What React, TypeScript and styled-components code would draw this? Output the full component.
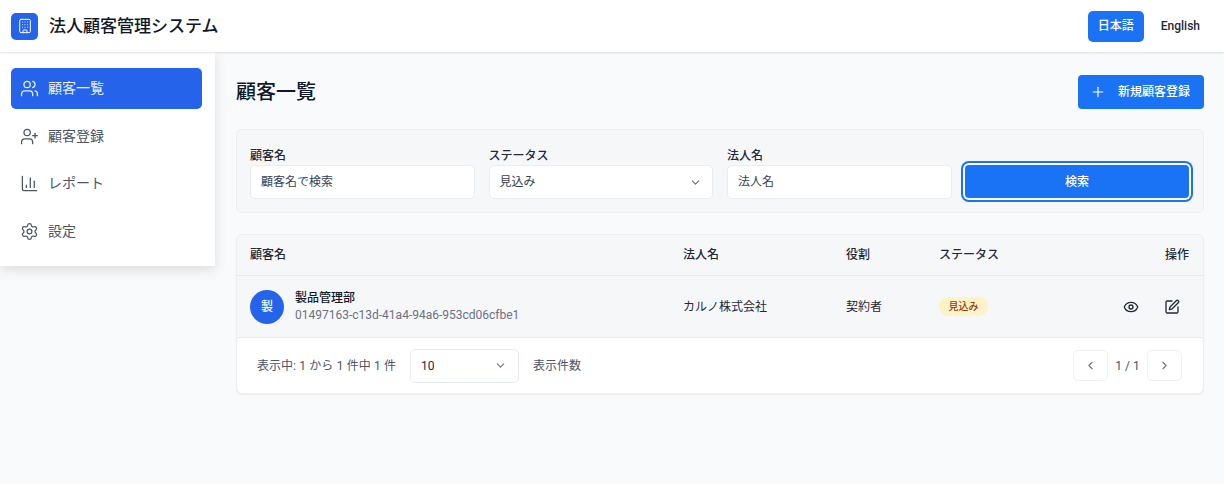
import * as React from 'react'
import styled, { createGlobalStyle } from 'styled-components'
import {
  Building,
  ChartColumn,
  ChevronDown,
  ChevronLeft,
  ChevronRight,
  Eye,
  Plus,
  Settings,
  SquarePen,
  UserPlus,
  Users,
} from 'lucide-react'

const GlobalStyle = createGlobalStyle`
  html, body {
    margin: 0;
    padding: 0;
    height: 100%;
    background: #f9fafb;
    color: #111827;
    font-family: Roboto, 'Noto Sans CJK JP', sans-serif;
    line-height: 1.5;
    overflow: hidden;
  }
  * {
    box-sizing: border-box;
  }
  button {
    line-height: 1.5;
  }
`

const Page = styled.div`
  width: 1224px;
  height: 484px;
  display: flex;
  flex-direction: column;
`

const Header = styled.header`
  height: 52px;
  flex: none;
  display: flex;
  align-items: center;
  justify-content: space-between;
  padding: 0 12px 0 11px;
  background: #fff;
  box-shadow: 0 1px 2px rgba(0, 0, 0, 0.12);
  position: relative;
  z-index: 2;
`

const Brand = styled.div`
  display: flex;
  align-items: center;
  gap: 11px;
`

const LogoMark = styled.div`
  width: 27px;
  height: 27px;
  border-radius: 5px;
  background: #2563eb;
  color: #fff;
  display: flex;
  align-items: center;
  justify-content: center;
`

const AppName = styled.h1`
  margin: 0;
  font-size: 17px;
  font-weight: 500;
  line-height: 24px;
  color: #111827;
`

const LangSwitch = styled.div`
  display: flex;
  gap: 5px;
`

const LangButton = styled.button<{ $active?: boolean }>`
  height: 31px;
  padding: 0 ${(props) => (props.$active ? '10px' : '12px')};
  border: 0;
  border-radius: 5px;
  font-family: inherit;
  font-size: 12px;
  font-weight: 500;
  background: ${(props) => (props.$active ? '#1a73f5' : 'transparent')};
  color: ${(props) => (props.$active ? '#fff' : '#1f2937')};
`

const Body = styled.div`
  flex: 1;
  display: flex;
  align-items: flex-start;
`

const Sidebar = styled.nav`
  width: 215px;
  flex: none;
  height: 214px;
  padding: 16px 13px 0 11px;
  background: #fff;
  display: flex;
  flex-direction: column;
  gap: 6.7px;
  box-shadow: 0 4px 12px rgba(0, 0, 0, 0.12);
  position: relative;
  z-index: 1;
`

const NavItem = styled.a<{ $active?: boolean }>`
  height: 41px;
  display: flex;
  align-items: center;
  gap: 9px;
  padding-left: 9px;
  border-radius: 5px;
  font-size: 14px;
  background: ${(props) => (props.$active ? '#2563eb' : 'transparent')};
  color: ${(props) => (props.$active ? '#e8efff' : '#4b5563')};
`

const Main = styled.main`
  flex: 1;
  padding: 23px 20px 0 21px;
  display: flex;
  flex-direction: column;
`

const TitleRow = styled.div`
  height: 34px;
  display: flex;
  align-items: center;
  justify-content: space-between;
  margin-bottom: 20px;
`

const PageTitle = styled.h2`
  margin: 0;
  font-size: 20px;
  font-weight: 500;
  color: #111827;
`

const AddButton = styled.button`
  width: 126px;
  height: 34px;
  border: 0;
  border-radius: 4px;
  background: #1a73f5;
  color: #fff;
  font-family: inherit;
  font-size: 12px;
  font-weight: 500;
  display: flex;
  align-items: center;
  gap: 12px;
  padding: 0 0 0 12px;
`

const FilterCard = styled.section`
  height: 84px;
  border: 1px solid #eceef1;
  border-radius: 6px;
  background: #f6f7f9;
  padding: 17px 13px 0;
  display: grid;
  grid-template-columns: repeat(4, 224.5px);
  column-gap: 14px;
  margin-bottom: 21px;
`

const Field = styled.div`
  display: flex;
  flex-direction: column;
`

const FieldLabel = styled.label`
  font-size: 12px;
  line-height: 18px;
  height: 18px;
  font-weight: 500;
  color: #1f2937;
`

const TextBox = styled.div`
  height: 34px;
  background: #fff;
  border: 1px solid #e9ecf0;
  border-radius: 5px;
  padding: 0 10px;
  display: flex;
  align-items: center;
  justify-content: space-between;
  font-size: 12px;
  color: #374151;
`

const SearchButton = styled.button`
  height: 33px;
  margin: 18px 0 0 -0.5px;
  width: 224px;
  border: 0;
  border-radius: 4px;
  background: #1a73f5;
  color: #fff;
  font-family: inherit;
  font-size: 12px;
  font-weight: 500;
  box-shadow: 0 0 0 2px #fff, 0 0 0 4px #1a73f5;
`

const TableCard = styled.section`
  border: 1px solid #eceef1;
  border-radius: 6px;
  background: #fff;
  overflow: hidden;
  box-shadow: 0 1px 2px rgba(0, 0, 0, 0.06);
`

const Row = styled.div<{ $height: number }>`
  height: ${(props) => props.$height}px;
  display: grid;
  grid-template-columns: 433px 163px 93px 1fr auto;
  align-items: center;
  padding: 0 14px 0 13px;
  background: #f6f7f9;
  border-bottom: 1px solid #e7eaee;
  font-size: 12px;
`

const HeadCell = styled.div<{ $right?: boolean }>`
  font-weight: 500;
  color: #1f2937;
  text-align: ${(props) => (props.$right ? 'right' : 'left')};
`

const Cell = styled.div`
  color: #1f2937;
`

const CustomerCell = styled.div`
  display: flex;
  align-items: center;
  gap: 11px;
`

const Avatar = styled.div`
  width: 34px;
  height: 34px;
  border-radius: 50%;
  background: #2563eb;
  color: #fff;
  font-size: 12px;
  font-weight: 500;
  display: flex;
  align-items: center;
  justify-content: center;
`

const CustomerName = styled.div`
  font-size: 12px;
  line-height: 17px;
  font-weight: 500;
  color: #111827;
`

const CustomerId = styled.div`
  font-size: 12px;
  line-height: 17px;
  color: #6b7280;
`

const Badge = styled.span`
  display: inline-flex;
  align-items: center;
  height: 19px;
  padding: 0 9.5px;
  border-radius: 10px;
  background: #fef3c7;
  color: #92400e;
  font-size: 10px;
  font-weight: 500;
`

const Actions = styled.div`
  display: flex;
  gap: 25px;
  padding-right: 9px;
  color: #1f2937;
`

const Footer = styled.div`
  height: 55px;
  display: flex;
  align-items: center;
  justify-content: space-between;
  padding: 0 21px 0 20px;
  font-size: 12px;
  color: #4b5563;
`

const FooterGroup = styled.div`
  display: flex;
  align-items: center;
`

const RangeText = styled.span`
  word-spacing: 0.35px;
`

const PageSize = styled.div`
  width: 109px;
  height: 34px;
  margin: 0 14px;
  border: 1px solid #e5eaf2;
  border-radius: 5px;
  padding: 0 11px 0 10px;
  display: flex;
  align-items: center;
  justify-content: space-between;
  color: #1f2937;
`

const PageButton = styled.div`
  width: 35px;
  height: 31px;
  border: 1px solid #f0f1f4;
  border-radius: 5px;
  display: flex;
  align-items: center;
  justify-content: center;
  color: #6b7280;
`

const PageLabel = styled.span`
  width: 39px;
  text-align: center;
  color: #4b5563;
`

const navItems = [
  { label: '顧客一覧', Icon: Users, active: true },
  { label: '顧客登録', Icon: UserPlus },
  { label: 'レポート', Icon: ChartColumn },
  { label: '設定', Icon: Settings },
]

const App: React.FunctionComponent = () => (
  <Page>
    <GlobalStyle />
    <Header>
      <Brand>
        <LogoMark>
          <Building size={16} strokeWidth={1.5} />
        </LogoMark>
        <AppName>法人顧客管理システム</AppName>
      </Brand>
      <LangSwitch>
        <LangButton $active>日本語</LangButton>
        <LangButton>English</LangButton>
      </LangSwitch>
    </Header>
    <Body>
      <Sidebar>
        {navItems.map(({ label, Icon, active }) => (
          <NavItem key={label} $active={active}>
            <Icon size={19} strokeWidth={1.6} />
            {label}
          </NavItem>
        ))}
      </Sidebar>
      <Main>
        <TitleRow>
          <PageTitle>顧客一覧</PageTitle>
          <AddButton>
            <Plus size={16} strokeWidth={1.75} />
            新規顧客登録
          </AddButton>
        </TitleRow>
        <FilterCard>
          <Field>
            <FieldLabel>顧客名</FieldLabel>
            <TextBox>顧客名で検索</TextBox>
          </Field>
          <Field>
            <FieldLabel>ステータス</FieldLabel>
            <TextBox>
              見込み
              <ChevronDown size={13} color="#6b7280" />
            </TextBox>
          </Field>
          <Field>
            <FieldLabel>法人名</FieldLabel>
            <TextBox>法人名</TextBox>
          </Field>
          <SearchButton>検索</SearchButton>
        </FilterCard>
        <TableCard>
          <Row $height={41}>
            <HeadCell>顧客名</HeadCell>
            <HeadCell>法人名</HeadCell>
            <HeadCell>役割</HeadCell>
            <HeadCell>ステータス</HeadCell>
            <HeadCell $right>操作</HeadCell>
          </Row>
          <Row $height={62}>
            <CustomerCell>
              <Avatar>製</Avatar>
              <div>
                <CustomerName>製品管理部</CustomerName>
                <CustomerId>01497163-c13d-41a4-94a6-953cd06cfbe1</CustomerId>
              </div>
            </CustomerCell>
            <Cell>カルノ株式会社</Cell>
            <Cell>契約者</Cell>
            <Cell>
              <Badge>見込み</Badge>
            </Cell>
            <Actions>
              <Eye size={16} />
              <SquarePen size={16} />
            </Actions>
          </Row>
          <Footer>
            <FooterGroup>
              <RangeText>表示中: 1 から 1 件中 1 件</RangeText>
              <PageSize>
                10
                <ChevronDown size={13} color="#6b7280" />
              </PageSize>
              表示件数
            </FooterGroup>
            <FooterGroup>
              <PageButton>
                <ChevronLeft size={13} />
              </PageButton>
              <PageLabel>1 / 1</PageLabel>
              <PageButton>
                <ChevronRight size={13} />
              </PageButton>
            </FooterGroup>
          </Footer>
        </TableCard>
      </Main>
    </Body>
  </Page>
)

export default App
